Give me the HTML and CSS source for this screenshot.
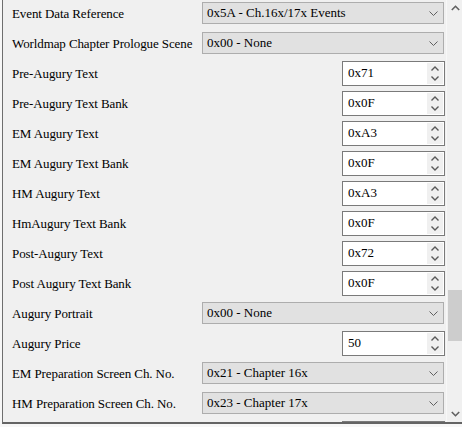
FILE: index.html
```html
<!DOCTYPE html>
<html>
<head>
<meta charset="utf-8">
<link rel="stylesheet" href="styles.css">
</head>
<body>
<div class="panel">
  <div class="content">
    <div class="row"><span class="label">Event Data Reference</span><div class="select"><span>0x5A - Ch.16x/17x Events</span><svg class="dd" width="9" height="5" viewBox="0 0 9 5"><path d="M0.5 0.5 L4.5 4.5 L8.5 0.5" fill="none" stroke="#606060" stroke-width="1"/></svg></div></div>
    <div class="row"><span class="label">Worldmap Chapter Prologue Scene</span><div class="select"><span>0x00 - None</span><svg class="dd" width="9" height="5" viewBox="0 0 9 5"><path d="M0.5 0.5 L4.5 4.5 L8.5 0.5" fill="none" stroke="#606060" stroke-width="1"/></svg></div></div>
    <div class="row"><span class="label">Pre-Augury Text</span><div class="num"><span>0x71</span><div class="spin"><svg width="8" height="5" viewBox="0 0 8 5"><path d="M0.5 4.5 L4 1 L7.5 4.5" fill="none" stroke="#5a5a5a" stroke-width="1.4"/></svg><svg width="8" height="5" viewBox="0 0 8 5"><path d="M0.5 0.5 L4 4 L7.5 0.5" fill="none" stroke="#5a5a5a" stroke-width="1.4"/></svg></div></div></div>
    <div class="row"><span class="label">Pre-Augury Text Bank</span><div class="num"><span>0x0F</span><div class="spin"><svg width="8" height="5" viewBox="0 0 8 5"><path d="M0.5 4.5 L4 1 L7.5 4.5" fill="none" stroke="#5a5a5a" stroke-width="1.4"/></svg><svg width="8" height="5" viewBox="0 0 8 5"><path d="M0.5 0.5 L4 4 L7.5 0.5" fill="none" stroke="#5a5a5a" stroke-width="1.4"/></svg></div></div></div>
    <div class="row"><span class="label">EM Augury Text</span><div class="num"><span>0xA3</span><div class="spin"><svg width="8" height="5" viewBox="0 0 8 5"><path d="M0.5 4.5 L4 1 L7.5 4.5" fill="none" stroke="#5a5a5a" stroke-width="1.4"/></svg><svg width="8" height="5" viewBox="0 0 8 5"><path d="M0.5 0.5 L4 4 L7.5 0.5" fill="none" stroke="#5a5a5a" stroke-width="1.4"/></svg></div></div></div>
    <div class="row"><span class="label">EM Augury Text Bank</span><div class="num"><span>0x0F</span><div class="spin"><svg width="8" height="5" viewBox="0 0 8 5"><path d="M0.5 4.5 L4 1 L7.5 4.5" fill="none" stroke="#5a5a5a" stroke-width="1.4"/></svg><svg width="8" height="5" viewBox="0 0 8 5"><path d="M0.5 0.5 L4 4 L7.5 0.5" fill="none" stroke="#5a5a5a" stroke-width="1.4"/></svg></div></div></div>
    <div class="row"><span class="label">HM Augury Text</span><div class="num"><span>0xA3</span><div class="spin"><svg width="8" height="5" viewBox="0 0 8 5"><path d="M0.5 4.5 L4 1 L7.5 4.5" fill="none" stroke="#5a5a5a" stroke-width="1.4"/></svg><svg width="8" height="5" viewBox="0 0 8 5"><path d="M0.5 0.5 L4 4 L7.5 0.5" fill="none" stroke="#5a5a5a" stroke-width="1.4"/></svg></div></div></div>
    <div class="row"><span class="label">HmAugury Text Bank</span><div class="num"><span>0x0F</span><div class="spin"><svg width="8" height="5" viewBox="0 0 8 5"><path d="M0.5 4.5 L4 1 L7.5 4.5" fill="none" stroke="#5a5a5a" stroke-width="1.4"/></svg><svg width="8" height="5" viewBox="0 0 8 5"><path d="M0.5 0.5 L4 4 L7.5 0.5" fill="none" stroke="#5a5a5a" stroke-width="1.4"/></svg></div></div></div>
    <div class="row"><span class="label">Post-Augury Text</span><div class="num"><span>0x72</span><div class="spin"><svg width="8" height="5" viewBox="0 0 8 5"><path d="M0.5 4.5 L4 1 L7.5 4.5" fill="none" stroke="#5a5a5a" stroke-width="1.4"/></svg><svg width="8" height="5" viewBox="0 0 8 5"><path d="M0.5 0.5 L4 4 L7.5 0.5" fill="none" stroke="#5a5a5a" stroke-width="1.4"/></svg></div></div></div>
    <div class="row"><span class="label">Post Augury Text Bank</span><div class="num"><span>0x0F</span><div class="spin"><svg width="8" height="5" viewBox="0 0 8 5"><path d="M0.5 4.5 L4 1 L7.5 4.5" fill="none" stroke="#5a5a5a" stroke-width="1.4"/></svg><svg width="8" height="5" viewBox="0 0 8 5"><path d="M0.5 0.5 L4 4 L7.5 0.5" fill="none" stroke="#5a5a5a" stroke-width="1.4"/></svg></div></div></div>
    <div class="row"><span class="label">Augury Portrait</span><div class="select"><span>0x00 - None</span><svg class="dd" width="9" height="5" viewBox="0 0 9 5"><path d="M0.5 0.5 L4.5 4.5 L8.5 0.5" fill="none" stroke="#606060" stroke-width="1"/></svg></div></div>
    <div class="row"><span class="label">Augury Price</span><div class="num"><span>50</span><div class="spin"><svg width="8" height="5" viewBox="0 0 8 5"><path d="M0.5 4.5 L4 1 L7.5 4.5" fill="none" stroke="#5a5a5a" stroke-width="1.4"/></svg><svg width="8" height="5" viewBox="0 0 8 5"><path d="M0.5 0.5 L4 4 L7.5 0.5" fill="none" stroke="#5a5a5a" stroke-width="1.4"/></svg></div></div></div>
    <div class="row"><span class="label">EM Preparation Screen Ch. No.</span><div class="select"><span>0x21 - Chapter 16x</span><svg class="dd" width="9" height="5" viewBox="0 0 9 5"><path d="M0.5 0.5 L4.5 4.5 L8.5 0.5" fill="none" stroke="#606060" stroke-width="1"/></svg></div></div>
    <div class="row"><span class="label">HM Preparation Screen Ch. No.</span><div class="select"><span>0x23 - Chapter 17x</span><svg class="dd" width="9" height="5" viewBox="0 0 9 5"><path d="M0.5 0.5 L4.5 4.5 L8.5 0.5" fill="none" stroke="#606060" stroke-width="1"/></svg></div></div>
    <div class="row"><span class="label"></span><div class="num"><span></span><div class="spin"><svg width="8" height="5" viewBox="0 0 8 5"><path d="M0.5 4.5 L4 1 L7.5 4.5" fill="none" stroke="#5a5a5a" stroke-width="1.4"/></svg></div></div></div>
  </div>
  <div class="scrollbar">
    <svg class="arrow" width="9" height="6" viewBox="0 0 9 6"><path d="M0.8 5 L4.5 1.3 L8.2 5" fill="none" stroke="#606060" stroke-width="1.6"/></svg>
    <div class="track"><div class="thumb"></div></div>
    <svg class="arrow" width="9" height="6" viewBox="0 0 9 6"><path d="M0.8 1 L4.5 4.7 L8.2 1" fill="none" stroke="#606060" stroke-width="1.6"/></svg>
  </div>
</div>
</body>
</html>
```

FILE: styles.css
```css
html, body {
  margin: 0;
  padding: 0;
  background: #f7f7f7;
  width: 462px;
  height: 427px;
  overflow: hidden;
}

.panel {
  margin-left: 2px;
  width: 460px;
  height: 422px;
  border-left: 1px solid #6e6e6e;
  border-bottom: 2px solid #646464;
  background: #f0f0f0;
  display: flex;
  overflow: hidden;
}

.content {
  width: 443px;
  display: flex;
  flex-direction: column;
  font-family: "Liberation Serif", "Times New Roman", serif;
  font-size: 13px;
  color: #000;
}

.row {
  height: 30px;
  flex: 0 0 30px;
  display: flex;
  align-items: flex-start;
  justify-content: space-between;
}

.label {
  padding-left: 9px;
  line-height: 27px;
  white-space: nowrap;
  flex: 0 1 auto;
  min-width: 0;
  letter-spacing: -0.1px;
}

.select {
  flex: 0 0 auto;
  margin-top: 2px;
  margin-right: 2px;
  width: 236px;
  height: 20px;
  border: 1px solid #adadad;
  background: #e1e1e1;
  display: flex;
  align-items: center;
  justify-content: space-between;
  padding-left: 4px;
}

.select span {
  line-height: 20px;
}

.select .dd {
  margin-right: 5px;
}

.num {
  flex: 0 0 auto;
  margin-top: 1px;
  margin-right: 1px;
  width: 101px;
  height: 23px;
  border: 1px solid #7a7a7a;
  background: #fff;
  display: flex;
  justify-content: space-between;
  align-items: stretch;
}

.num span {
  padding-left: 5px;
  line-height: 21px;
}

.spin {
  width: 16px;
  margin: 1px 1px 1px 0;
  background: #f0f0f0;
  display: flex;
  flex-direction: column;
  align-items: center;
  justify-content: center;
  gap: 5px;
}

.scrollbar {
  width: 16px;
  display: flex;
  flex-direction: column;
  align-items: center;
  background: #f0f0f0;
  border-left: 1px solid #f7f7f7;
}

.scrollbar .arrow {
  flex: 0 0 auto;
  margin: 5px 0;
}

.track {
  flex: 1;
  width: 100%;
  padding-top: 274px;
  box-sizing: border-box;
}

.thumb {
  margin-left: 1px;
  width: 14px;
  height: 51px;
  background: #cdcdcd;
}
```
